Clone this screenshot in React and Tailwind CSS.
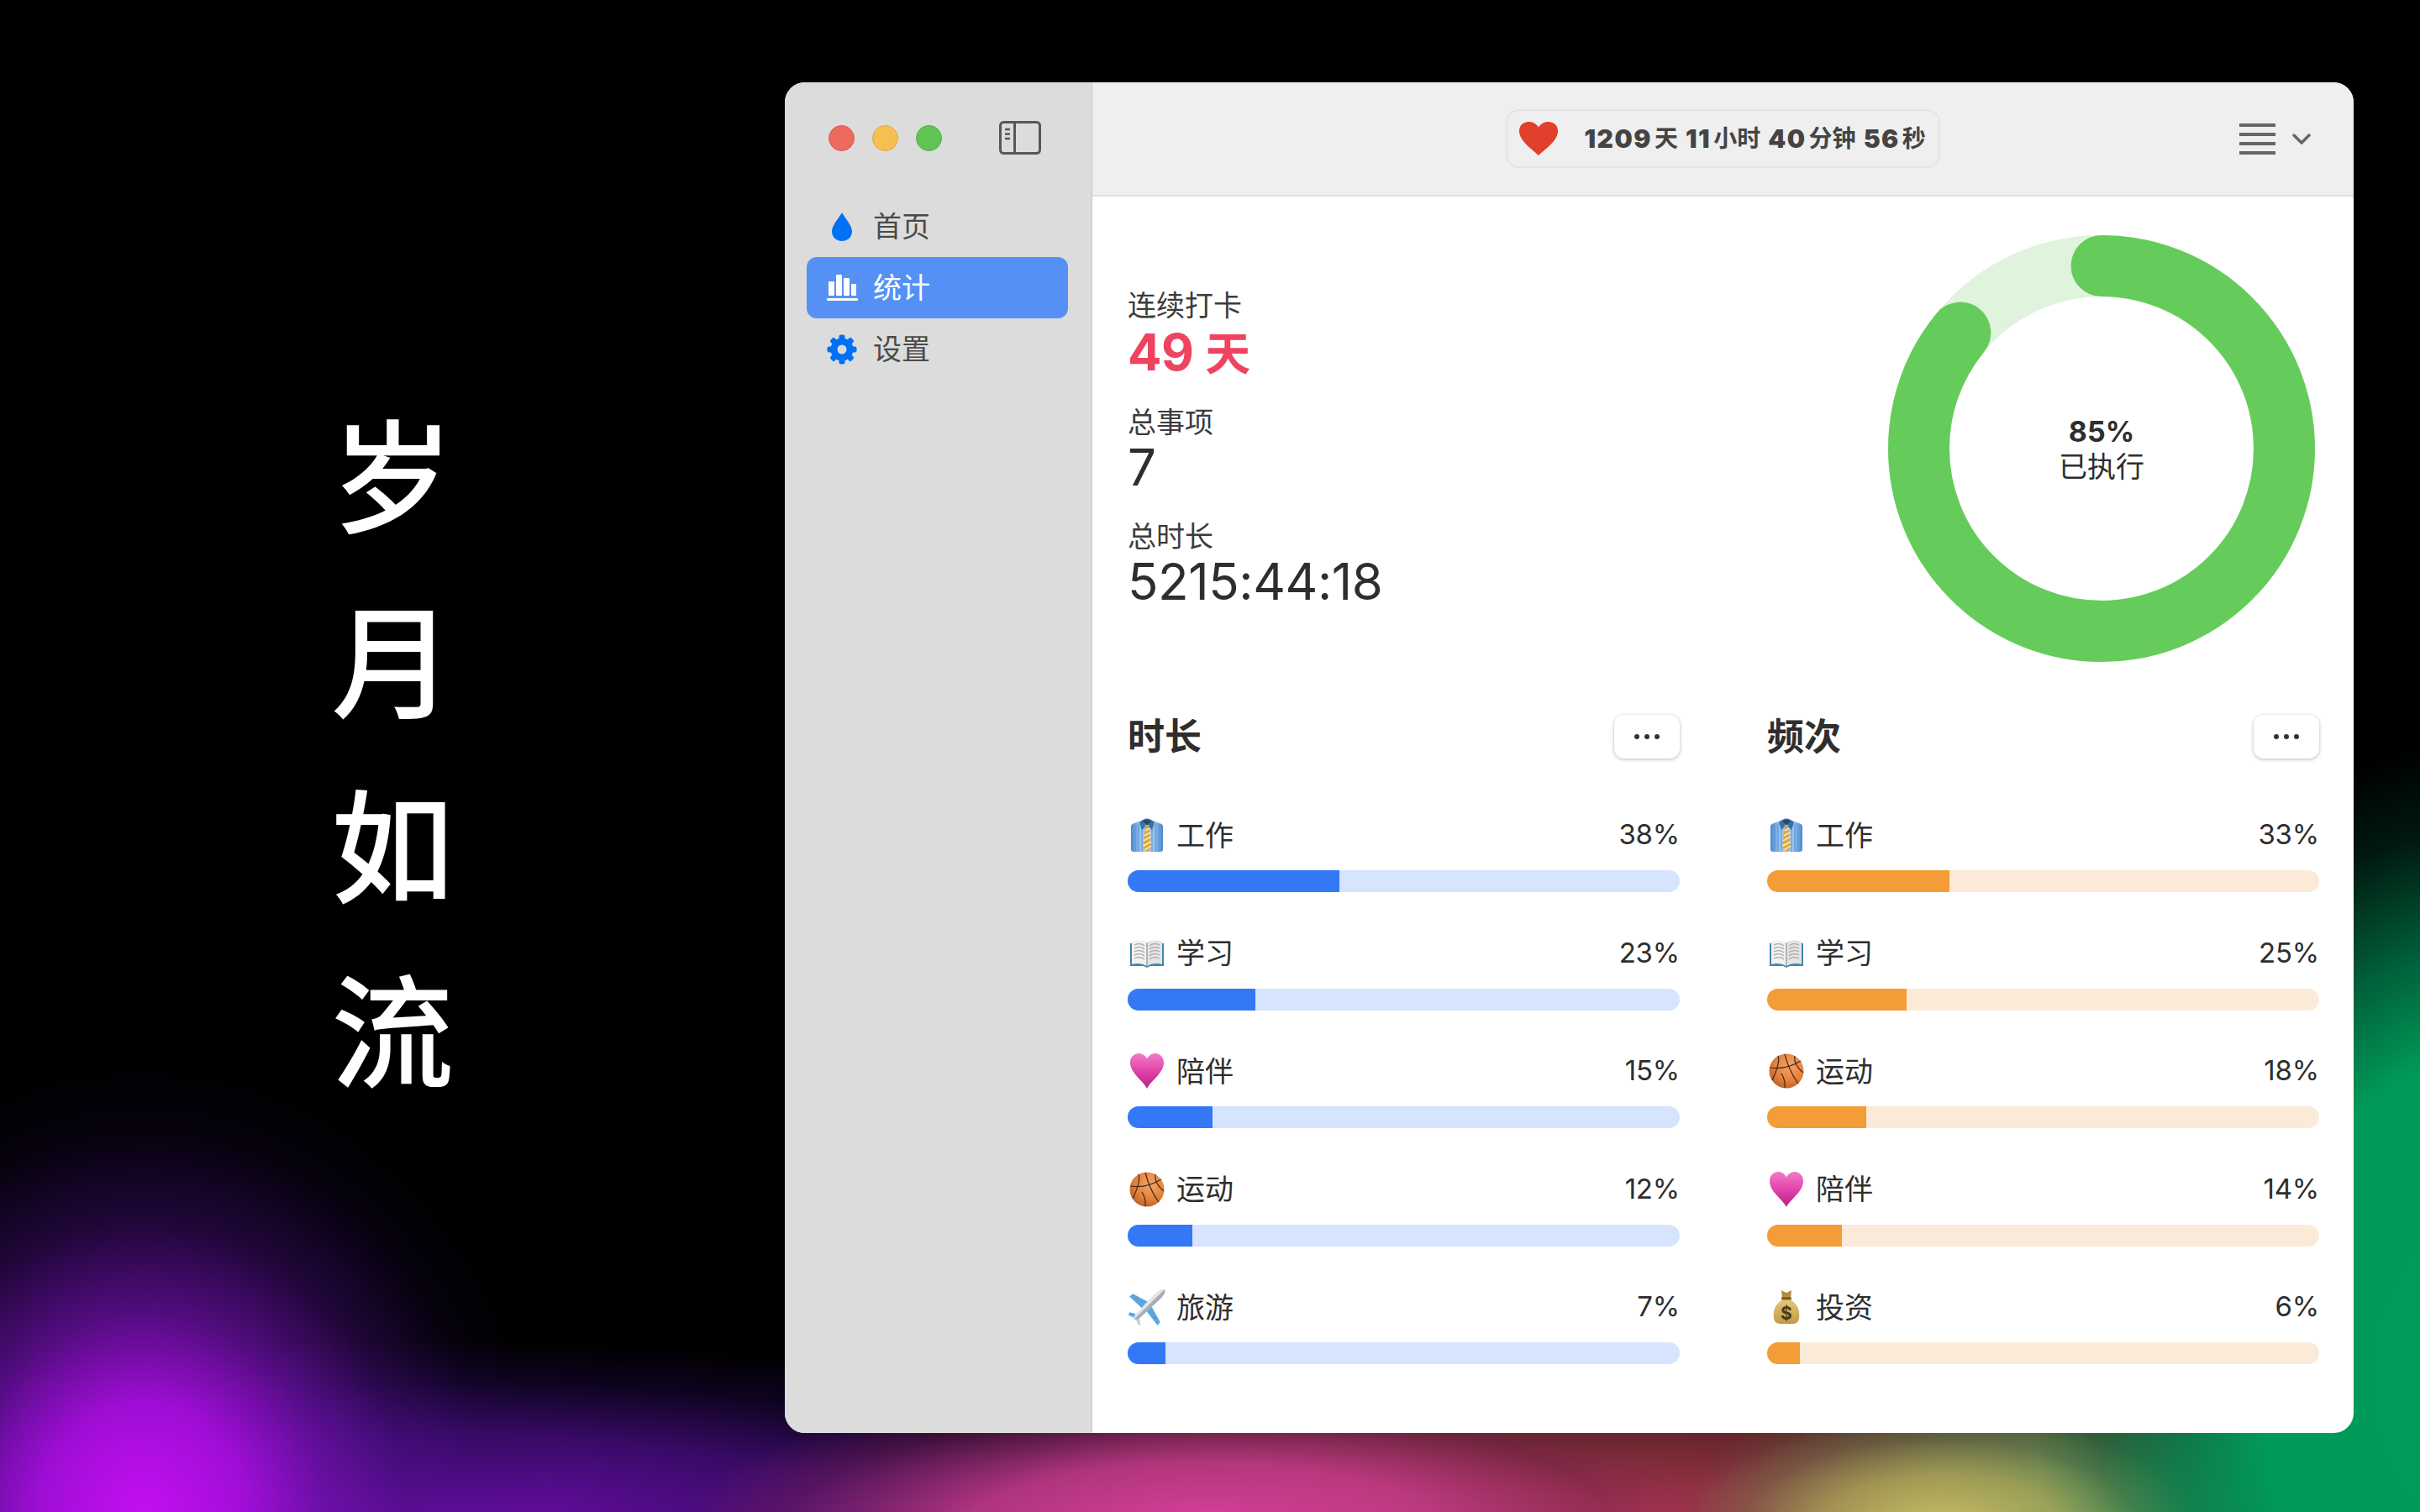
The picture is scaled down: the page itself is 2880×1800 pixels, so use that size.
const durationRows = [
  { icon: 'shirt', name: '工作', pct: 38, fill: 38.4 },
  { icon: 'book', name: '学习', pct: 23, fill: 23.1 },
  { icon: 'heart', name: '陪伴', pct: 15, fill: 15.4 },
  { icon: 'ball', name: '运动', pct: 12, fill: 11.7 },
  { icon: 'plane', name: '旅游', pct: 7, fill: 6.8 },
];

const countRows = [
  { icon: 'shirt', name: '工作', pct: 33, fill: 33.1 },
  { icon: 'book', name: '学习', pct: 25, fill: 25.2 },
  { icon: 'ball', name: '运动', pct: 18, fill: 18 },
  { icon: 'heart', name: '陪伴', pct: 14, fill: 13.6 },
  { icon: 'bag', name: '投资', pct: 6, fill: 6 },
];

function ShirtIcon() {
  return (
    <svg viewBox="0 0 42 42" className="w-[42px] h-[42px]">
      <defs>
        <linearGradient id="shirtBody" x1="0" y1="0" x2="1" y2="0">
          <stop offset="0" stopColor="#4a88cf" />
          <stop offset="0.3" stopColor="#9cc6f0" />
          <stop offset="0.7" stopColor="#9cc6f0" />
          <stop offset="1" stopColor="#4a88cf" />
        </linearGradient>
      </defs>
      <path d="M2 11 Q2 8 6 7 L14 4 H28 L36 7 Q40 8 40 11 V38 Q40 41 37 41 H5 Q2 41 2 38 Z" fill="url(#shirtBody)" />
      <path d="M7 9V41M11 8V41M15 12V41M27 12V41M31 8V41M35 9V41" stroke="#5f98d6" strokeWidth="1.1" />
      <path d="M12 6 Q21 -3 30 6 L27 15 L21 9 L15 15 Z" fill="#3a70a8" />
      <path d="M16 5 Q21 1 26 5 L21 9 Z" fill="#234a75" />
      <path d="M18.500 9 H23.500 L23 13 L26 36 L21 41 L16 36 L19 13 Z" fill="#e0a534" />
      <path d="M19 16 L24 13 M18 22 L25 18 M17 28 L25.500 23 M16.500 34 L26 29 M18 39 L26 34" stroke="#f6e5b8" strokeWidth="2" />
    </svg>
  );
}

function BookIcon() {
  return (
    <svg viewBox="0 0 42 42" className="w-[42px] h-[42px]">
      <path d="M1 9 H41 V36 H25 L21 38 L17 36 H1 Z" fill="#3f86ab" />
      <path d="M3 7 Q13 3 21 8 V36 Q13 31 3 34 Z" fill="#f3f1ee" />
      <path d="M39 7 Q29 3 21 8 V36 Q29 31 39 34 Z" fill="#e6e4e2" />
      <path d="M6 11 Q13 8 18 12 M6 15 Q13 12 18 16 M6 19 Q13 16 18 20 M6 23 Q13 20 18 24 M6 27 Q13 24 18 28 M24 12 Q29 8 36 11 M24 16 Q29 12 36 15 M24 20 Q29 16 36 19 M24 24 Q29 20 36 23 M24 28 Q29 24 36 27" stroke="#a9a9ad" strokeWidth="1.3" fill="none" />
      <path d="M21 8V37" stroke="#8f8f92" strokeWidth="1.2" />
    </svg>
  );
}

function HeartIcon() {
  return (
    <svg viewBox="0 0 42 42" className="w-[42px] h-[42px]">
      <defs>
        <linearGradient id="pinkHeart" x1="0" y1="0" x2="0" y2="1">
          <stop offset="0" stopColor="#f27cc6" />
          <stop offset="0.45" stopColor="#e448ae" />
          <stop offset="1" stopColor="#b81e84" />
        </linearGradient>
      </defs>
      <path d="M21 42 C17 33 1 24 1 11 C1 4 6 0 11 0 C15.500 0 19 2.500 21 6.500 C23 2.500 26.500 0 31 0 C36 0 41 4 41 11 C41 24 25 33 21 42 Z" fill="url(#pinkHeart)" />
    </svg>
  );
}

function BallIcon() {
  return (
    <svg viewBox="0 0 42 42" className="w-[42px] h-[42px]">
      <defs>
        <radialGradient id="ballFill" cx="0.6" cy="0.35" r="0.75">
          <stop offset="0" stopColor="#f5a567" />
          <stop offset="0.6" stopColor="#e37f39" />
          <stop offset="1" stopColor="#b25a20" />
        </radialGradient>
      </defs>
      <circle cx="21" cy="21" r="20.500" fill="url(#ballFill)" />
      <g stroke="#3d2a1c" strokeWidth="1.2" fill="none">
        <path d="M19 1 Q24 21 35 36" />
        <path d="M1.500 17 Q20 20 38 9" />
        <path d="M11 3 Q14 11 4 32" />
        <path d="M31 3 Q29 13 41 23" />
        <path d="M15 24 Q20 32 19 41" />
      </g>
    </svg>
  );
}

function PlaneIcon() {
  return (
    <svg viewBox="0 0 42 42" className="w-[44px] h-[44px] -ml-[1px] -mr-[1px]">
      <path d="M22 15 L5 6 L1 9 L16 23 Z" fill="#57a8e6" />
      <path d="M26 20 L36 38 L33 42 L20 25 Z" fill="#57a8e6" />
      <path d="M10 29 L1 27 L0 30 L8 34 Z" fill="#57a8e6" />
      <path d="M12 32 L14 42 L11 41 L8 34 Z" fill="#c9ccd2" />
      <path d="M41 1 C37 0 33 3 29 7 L7 30 L6 35 L11 35 L35 13 C39 9 43 4 41 1 Z" fill="#e4e6ea" />
      <path d="M41 1 C43 4 39 9 35 13 L11 35 L6 35 Z" fill="#a9adb5" />
      <circle cx="9" cy="12" r="1.800" fill="#8a8f98" />
      <circle cx="30" cy="33" r="1.800" fill="#8a8f98" />
    </svg>
  );
}

function BagIcon() {
  return (
    <svg viewBox="0 0 42 42" className="w-[42px] h-[42px]">
      <defs>
        <linearGradient id="bagFill" x1="0" y1="0" x2="0" y2="1">
          <stop offset="0" stopColor="#e5c878" />
          <stop offset="1" stopColor="#c09a48" />
        </linearGradient>
      </defs>
      <path d="M15 1 L21 4 L27 1 L26 11 H16 Z" fill="#b48f42" />
      <path d="M16 12 C6 19 5 27 6 35 C7 40 11 41 15 41 H27 C31 41 35 40 36 35 C37 27 36 19 26 12 Z" fill="url(#bagFill)" />
      <rect x="15" y="9" width="12" height="3.500" rx="1.500" fill="#7f6228" />
      <text x="21" y="36" textAnchor="middle" fontSize="21" fontWeight="700" fill="#4a3a1a">$</text>
    </svg>
  );
}

const icons = { shirt: ShirtIcon, book: BookIcon, heart: HeartIcon, ball: BallIcon, plane: PlaneIcon, bag: BagIcon };

function Row({ row, bar, track }) {
  const Icon = icons[row.icon];
  return (
    <div className="flex flex-col">
      <div className="flex items-center h-[50px] pt-[2px] text-[34px] text-[#2e2e2e] mb-[18px]">
        <span className="ml-[2px] mr-[14px] flex items-center">
          <Icon />
        </span>
        <span className="flex-1">{row.name}</span>
        <span className="text-[33px] tracking-[-0.2px]">{row.pct}%</span>
      </div>
      <div className={`h-[26px] rounded-full overflow-hidden ${track}`}>
        <div className={`h-full ${bar}`} style={{ width: `${row.fill}%` }} />
      </div>
    </div>
  );
}

function Chart({ title, rows, bar, track }) {
  return (
    <section className="flex flex-col">
      <div className="flex items-center justify-between h-[52px] mb-[65px]">
        <h2 className="text-[44px] font-bold text-[#2e2e2e]">{title}</h2>
        <button className="w-[78px] h-[52px] rounded-[12px] bg-white shadow-[0_1px_4px_rgba(0,0,0,0.28)] flex items-center justify-center gap-[6px]">
          <span className="w-[6px] h-[6px] rounded-full bg-[#333]" />
          <span className="w-[6px] h-[6px] rounded-full bg-[#333]" />
          <span className="w-[6px] h-[6px] rounded-full bg-[#333]" />
        </button>
      </div>
      <div className="flex flex-col gap-[46.500px]">
        {rows.map((row) => (
          <Row key={row.name} row={row} bar={bar} track={track} />
        ))}
      </div>
    </section>
  );
}

function Donut() {
  const r = 217.5;
  const c = 2 * Math.PI * r;
  return (
    <div className="relative w-[508px] h-[508px] shrink-0">
      <svg viewBox="0 0 508 508" className="w-full h-full -rotate-90">
        <circle cx="254" cy="254" r={r} fill="none" stroke="#e0f3dd" strokeWidth="73" />
        <circle cx="254" cy="254" r={r} fill="none" stroke="#65cc5b" strokeWidth="73" strokeLinecap="round" strokeDasharray={`${c * 0.859} ${c}`} />
      </svg>
      <div className="absolute inset-0 flex flex-col items-center justify-center pt-[2px] text-[#2e2e2e]">
        <span className="text-[34px] leading-[42px] font-bold">85%</span>
        <span className="text-[34px] leading-[42px]">已执行</span>
      </div>
    </div>
  );
}

function Stat({ label, children }) {
  return (
    <div className="flex flex-col">
      <span className="text-[34px] leading-[40px] text-[#3c3c3c]">{label}</span>
      {children}
    </div>
  );
}

function NavItem({ icon, label, active }) {
  return (
    <div className={`flex items-center h-[73px] rounded-[12px] pl-[22px] ${active ? 'bg-[#5591f5] text-white' : 'text-[#4a4a4a]'}`}>
      <span className="w-[40px] flex justify-center">{icon}</span>
      <span className="ml-[17px] text-[34px]">{label}</span>
    </div>
  );
}

function Gear() {
  return (
    <svg viewBox="0 0 36 36" className="w-[36px] h-[36px]" fill="#0070f5">
      <circle cx="18" cy="18" r="9.500" fill="none" stroke="#0070f5" strokeWidth="8" />
      {[0, 45, 90, 135, 180, 225, 270, 315].map((deg) => (
        <rect key={deg} x="14.500" y="0.500" width="7" height="8" rx="2" transform={`rotate(${deg} 18 18)`} />
      ))}
    </svg>
  );
}

export default function App() {
  return (
    <div className="w-[2880px] h-[1800px] overflow-hidden flex items-start bg-black bg-[radial-gradient(ellipse_300px_130px_at_2310px_1815px,#c6bc62_0%,rgba(190,170,90,0.7)_45%,rgba(150,130,80,0.25)_78%,transparent_100%),radial-gradient(ellipse_540px_760px_at_2960px_1640px,#009c5a_0%,#009a58_50%,rgba(0,125,75,0.75)_68%,rgba(0,70,45,0.35)_86%,transparent_100%),radial-gradient(ellipse_520px_210px_at_2520px_1810px,rgba(60,175,100,0.95)_0%,rgba(90,140,85,0.7)_50%,transparent_100%),radial-gradient(ellipse_620px_175px_at_1430px_1820px,#d8409c_0%,rgba(200,60,140,0.85)_45%,rgba(130,35,90,0.4)_80%,transparent_100%),radial-gradient(ellipse_760px_210px_at_1950px_1800px,rgba(185,60,85,0.9)_0%,rgba(120,45,50,0.8)_50%,transparent_100%),radial-gradient(ellipse_480px_540px_at_170px_1805px,#c40ff0_0%,rgba(165,14,220,0.95)_25%,rgba(110,16,170,0.75)_45%,rgba(70,14,125,0.45)_65%,rgba(40,10,90,0.15)_85%,transparent_100%),radial-gradient(ellipse_1050px_220px_at_500px_1815px,rgba(125,15,195,0.9)_0%,rgba(85,15,155,0.65)_50%,rgba(40,10,90,0.35)_78%,transparent_100%)] [font-family:Inter,'Noto_Sans_CJK_SC',sans-serif]">
      <div className="w-[934px] h-full flex flex-col items-center justify-center text-white text-[146px] font-medium leading-[220px]">
        <span>岁</span>
        <span>月</span>
        <span>如</span>
        <span>流</span>
      </div>

      <div className="mt-[98px] w-[1867px] h-[1608px] rounded-[24px] overflow-hidden flex bg-white">
        <aside className="w-[366px] shrink-0 bg-[#dcdcdc] border-r border-[#c6c6c6] flex flex-col pl-[26px] pr-[28px]">
          <div className="h-[135px] flex items-center pl-[26px] pb-[3px]">
            <span className="w-[31px] h-[31px] rounded-full bg-[#ee6a5f] border border-[#d9584e]" />
            <span className="ml-[21px] w-[31px] h-[31px] rounded-full bg-[#f5c04f] border border-[#dfa83b]" />
            <span className="ml-[21px] w-[31px] h-[31px] rounded-full bg-[#61c554] border border-[#52ad46]" />
            <svg viewBox="0 0 50 40" className="ml-[68px] w-[50px] h-[40px] mb-[1px]" fill="none" stroke="#585858">
              <rect x="1.500" y="1.500" width="47" height="37" rx="4" strokeWidth="3" />
              <path d="M18.500 1.500V38.500" strokeWidth="3" />
              <path d="M7 10H13M7 15.500H13M7 21H13" strokeWidth="2.500" />
            </svg>
          </div>
          <nav className="flex flex-col">
            <NavItem
              label="首页"
              icon={
                <svg viewBox="0 0 24 34" className="w-[24px] h-[34px]">
                  <path d="M12 0 C15 6 24 15 24 22.500 C24 29 19 34 12 34 C5 34 0 29 0 22.500 C0 15 9 6 12 0 Z" fill="#0070f5" />
                </svg>
              }
            />
            <NavItem
              active
              label="统计"
              icon={
                <svg viewBox="0 0 37 31" className="w-[37px] h-[31px]" fill="#fff">
                  <rect x="2" y="8" width="7" height="17" rx="1" />
                  <rect x="11" y="0" width="7" height="25" rx="1" />
                  <rect x="20" y="4" width="7" height="21" rx="1" />
                  <rect x="29" y="11" width="6" height="14" rx="1" />
                  <rect x="0" y="28" width="37" height="3" rx="1" />
                </svg>
              }
            />
            <NavItem label="设置" icon={<Gear />} />
          </nav>
        </aside>

        <main className="flex-1 flex flex-col">
          <header className="h-[136px] shrink-0 bg-[#efefef] border-b-2 border-[#e0e0e0] flex items-center pl-[50px] pr-[51px]">
            <div className="flex-1" />
            <div className="w-[517px] h-[70px] rounded-[16px] border-2 border-[#e4e4e4] flex items-center pl-[14px] text-[#444]">
              <svg viewBox="0 0 46 40" className="w-[46px] h-[40px]">
                <path d="M23 40 C16 33 0 23 0 11 C0 4 5 0 11.500 0 C16.500 0 20.500 2.500 23 6.500 C25.500 2.500 29.500 0 34.500 0 C41 0 46 4 46 11 C46 23 30 33 23 40 Z" fill="#e0402c" />
              </svg>
              <span className="ml-[32px] text-[30px] flex items-center whitespace-nowrap">
                <b className="font-black tracking-[1.500px]">1209</b>
                <span className="font-bold text-[28px] ml-[3px] mr-[9px]">天</span>
                <b className="font-black tracking-[1.500px]">11</b>
                <span className="font-bold text-[28px] ml-[3px] mr-[9px]">小时</span>
                <b className="font-black tracking-[1.500px]">40</b>
                <span className="font-bold text-[28px] ml-[3px] mr-[9px]">分钟</span>
                <b className="font-black tracking-[1.500px]">56</b>
                <span className="font-bold text-[28px] ml-[3px]">秒</span>
              </span>
            </div>
            <div className="flex-1 flex justify-end items-center gap-[20px]">
              <div className="w-[43px] flex flex-col gap-[7px]">
                <span className="h-[4px] bg-[#666]" />
                <span className="h-[4px] bg-[#666]" />
                <span className="h-[4px] bg-[#666]" />
                <span className="h-[4px] bg-[#666]" />
              </div>
              <svg viewBox="0 0 22 14" className="w-[22px] h-[14px]" fill="none" stroke="#666" strokeWidth="3.500" strokeLinecap="round" strokeLinejoin="round">
                <path d="M2 3 L11 12 L20 3" />
              </svg>
            </div>
          </header>

          <div className="flex-1 flex flex-col pl-[42px] pr-[41px]">
            <div className="flex items-center justify-between pt-[46px] pr-[5px]">
              <div className="flex flex-col gap-[26px] pt-[5px]">
                <Stat label="连续打卡">
                  <span className="text-[60px] leading-[70px] font-bold text-[#ef4360] tracking-[-0.5px]">
                    49 <span className="text-[54px]">天</span>
                  </span>
                </Stat>
                <Stat label="总事项">
                  <span className="text-[60px] leading-[70px] -mt-[2px] mb-[2px] text-[#2e2e2e]">7</span>
                </Stat>
                <Stat label="总时长">
                  <span className="text-[60px] leading-[70px] -mt-[2px] mb-[2px] text-[#2e2e2e] tracking-[-0.4px]">5215:44:18</span>
                </Stat>
              </div>
              <Donut />
            </div>
            <div className="grid grid-cols-2 gap-[104px] mt-[63px]">
              <Chart title="时长" rows={durationRows} bar="bg-[#3478f6]" track="bg-[#d6e4fd]" />
              <Chart title="频次" rows={countRows} bar="bg-[#f49c38]" track="bg-[#fcead8]" />
            </div>
          </div>
        </main>
      </div>
    </div>
  );
}
